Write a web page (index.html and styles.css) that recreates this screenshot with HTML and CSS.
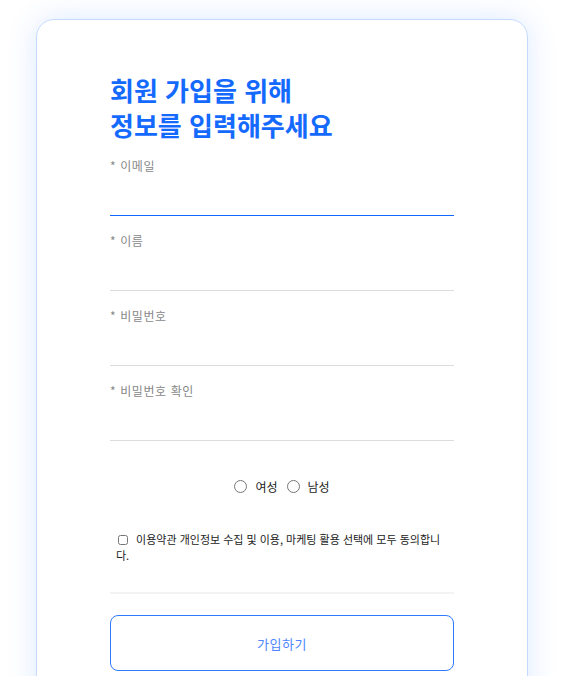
FILE: index.html
```html
<!DOCTYPE html>
<html lang="ko">
	<head>
		<meta charset="UTF-8" />
		<meta name="viewport" content="width=device-width, initial-scale=1.0" />
		<title>회원가입</title>
		<link rel="stylesheet" href="styles.css">
	</head>
	<body>
		<main class="card">
			<h1 class="title">회원 가입을 위해<br />정보를 입력해주세요</h1>
			<form class="signup" name="signupForm">
				<div class="field">
					<label for="email">* 이메일</label>
					<input type="email" id="email" name="email" class="active" />
				</div>
				<div class="field">
					<label for="name">* 이름</label>
					<input type="text" id="name" name="name" />
				</div>
				<div class="field">
					<label for="password">* 비밀번호</label>
					<input type="password" id="password" name="password" />
				</div>
				<div class="field">
					<label for="password2">* 비밀번호 확인</label>
					<input type="password" id="password2" name="password2" />
				</div>
				<div class="gender">
					<label class="radio"><input type="radio" name="gender" value="f" /> 여성</label>
					<label class="radio"><input type="radio" name="gender" value="m" /> 남성</label>
				</div>
				<p class="agree">
					<input type="checkbox" id="agree" name="agree" />
					<label for="agree">이용약관 개인정보 수집 및 이용, 마케팅 활용 선택에 모두 동의합니다.</label>
				</p>
				<hr class="divider" />
				<button type="submit">가입하기</button>
			</form>
		</main>
	</body>
</html>
```

FILE: styles.css
```css
body {
	font-family: "Noto Sans CJK KR", "Noto Sans", sans-serif;
	margin: 0;
	padding: 19px 0 0 36px;
	background-color: white;
}

.card {
	box-sizing: border-box;
	width: 492px;
	min-height: 700px;
	padding: 52px 73px 0;
	background-color: white;
	border: 1px solid #c4dbff;
	border-radius: 18px;
	box-shadow: 0px 0px 30px rgba(40, 120, 255, 0.16);
}

.title {
	margin: 0 0 16px;
	font-size: 26px;
	line-height: 35px;
	font-weight: bold;
	color: #1469ff;
}

.signup {
	display: flex;
	flex-direction: column;
}

.field {
	display: flex;
	flex-direction: column;
	margin-bottom: 17px;
}
.field label {
	font-size: 12px;
	line-height: 16px;
	letter-spacing: 0.6px;
	color: #888;
}
.field input {
	box-sizing: border-box;
	height: 42px;
	padding: 0;
	border: none;
	border-bottom: 1px solid #ddd;
	outline: none;
	font-size: 14px;
}
.field input.active {
	border-bottom: 1px solid #0f6bff;
}

.gender {
	display: flex;
	justify-content: center;
	align-items: center;
	gap: 9px;
	margin-top: 20px;
	font-size: 12px;
	color: #222;
}
.radio {
	display: flex;
	align-items: center;
}
.radio input {
	width: 13px;
	height: 13px;
	margin: 0 8px 0 0;
}

.agree {
	margin: 36px 0 0;
	padding: 0 6px;
	font-size: 11px;
	line-height: 16px;
	color: #222;
}
.agree input {
	width: 10px;
	height: 10px;
	margin: 0 5px 0 2px;
	vertical-align: -1px;
}

.divider {
	margin: 29px 0 0;
	border: none;
	border-top: 2px solid #f3f3f3;
}

button {
	margin-top: 21px;
	height: 56px;
	background-color: white;
	color: #4d86ff;
	font-family: inherit;
	font-size: 13px;
	letter-spacing: 0.5px;
	border: 1px solid #2f7bff;
	border-radius: 8px;
	cursor: pointer;
}
```
